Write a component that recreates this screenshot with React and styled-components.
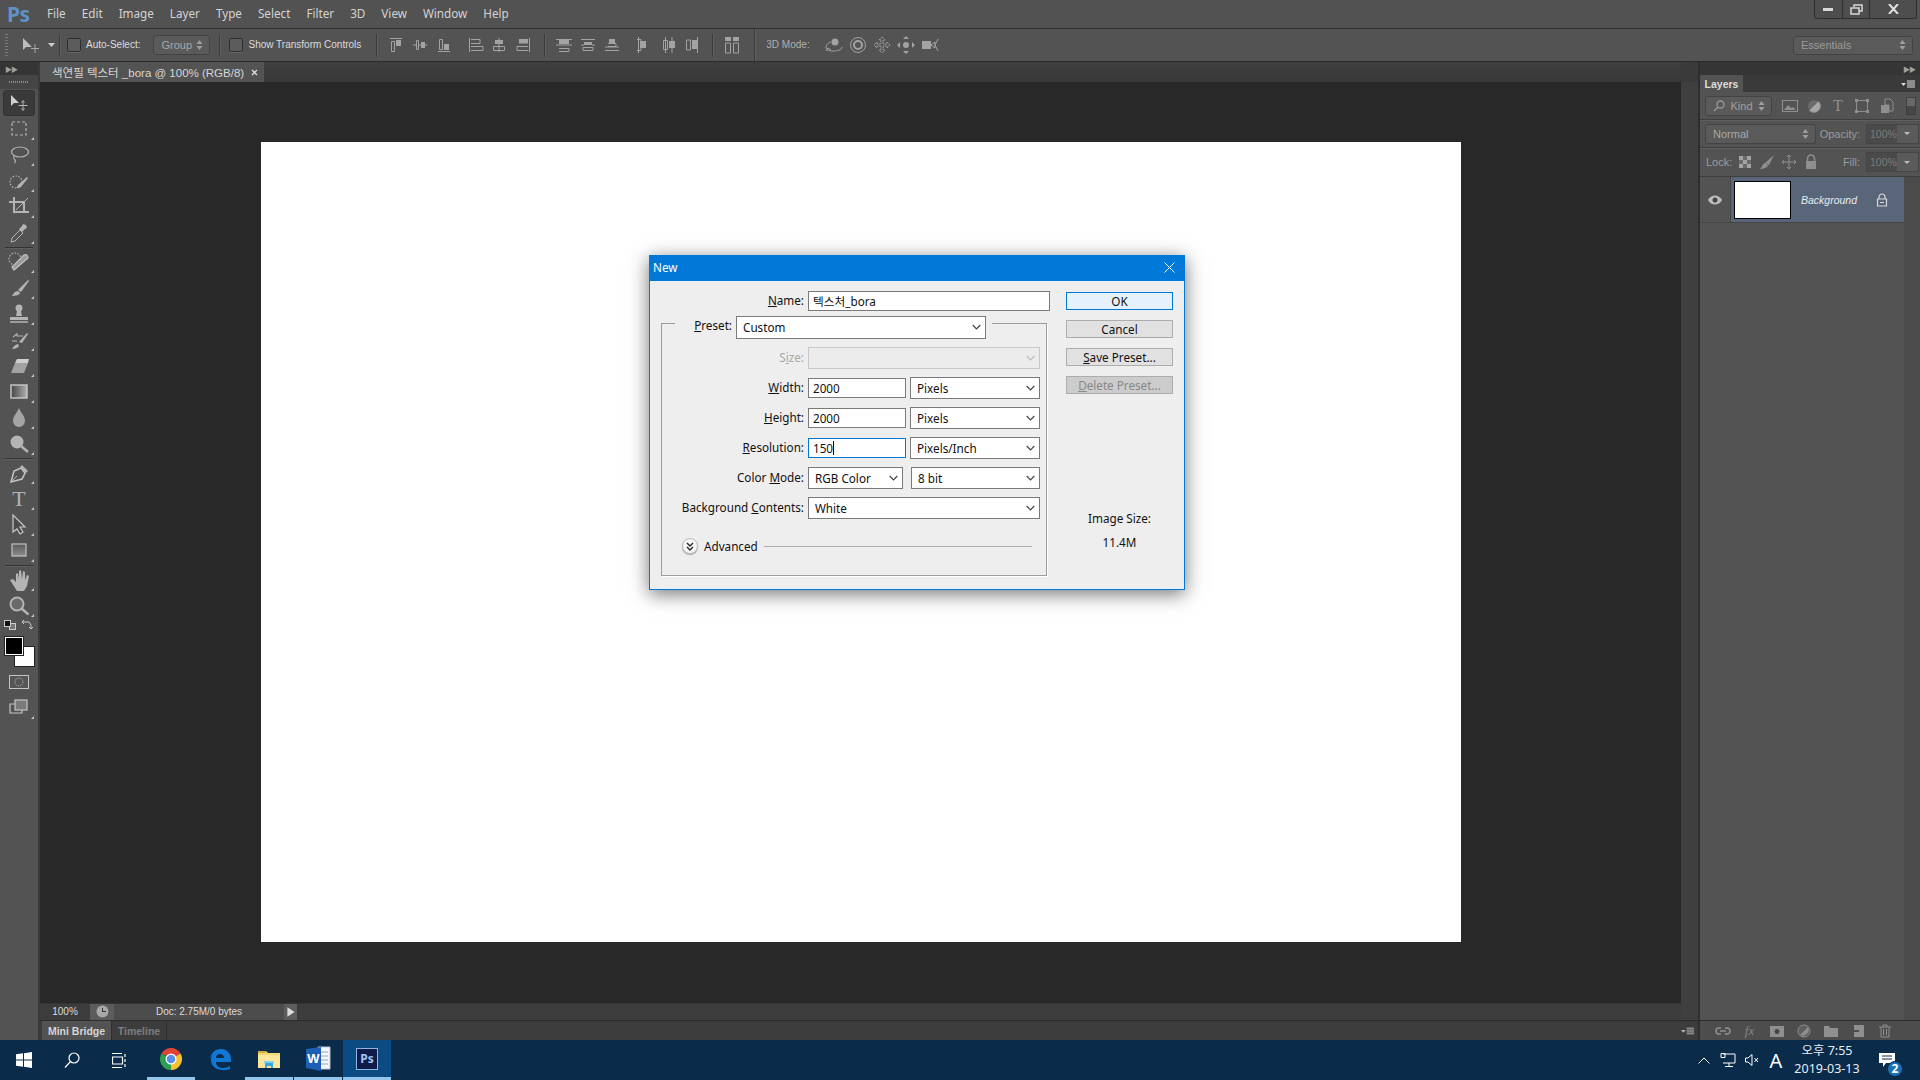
import React from "react";
import styled, { createGlobalStyle } from "styled-components";

const GlobalStyle = createGlobalStyle`
  html, body { margin: 0; padding: 0; background: #535353; overflow: hidden; }
  * { box-sizing: border-box; }
`;

const uiFont = `"Liberation Sans", "Noto Sans CJK KR", sans-serif`;
const menuFont = `"Noto Sans", "Noto Sans CJK KR", sans-serif`;
const dialogFont = `"Noto Sans", "Noto Sans CJK KR", sans-serif`;

const Root = styled.div`
  position: relative;
  width: 1920px;
  height: 1080px;
  display: flex;
  flex-direction: column;
  overflow: hidden;
  background: #535353;
  font-family: ${uiFont};
`;

/* ---------- menu bar ---------- */
const MenuBar = styled.div`
  height: 29px;
  flex: none;
  display: flex;
  align-items: center;
  padding-left: 7px;
  background: #525252;
  border-bottom: 1px solid #2f2f2f;
  position: relative;
`;
const Logo = styled.div`
  width: 40px;
  font: bold 21px/28px ${menuFont};
  color: #5f93c6;
  letter-spacing: -0.5px;
`;
const MenuList = styled.div`
  display: flex;
  gap: 16px;
  padding-bottom: 2px;
`;
const MenuItem = styled.span`
  font: 11.7px/26px ${menuFont};
  color: #d4d4d4;
`;
const WindowButtons = styled.div`
  position: absolute;
  top: 0;
  right: 3px;
  height: 19px;
  display: flex;
  border: 1px solid #2e2e2e;
  border-top: none;
  border-radius: 0 0 3px 3px;
  background: #4e4e4e;
`;
const WindowButton = styled.div`
  width: ${(p) => p.$w}px;
  display: flex;
  align-items: center;
  justify-content: center;
  border-left: ${(p) => (p.$first ? "none" : "1px solid #2e2e2e")};
`;

/* ---------- options bar ---------- */
const OptionsBar = styled.div`
  height: 33px;
  flex: none;
  display: flex;
  align-items: center;
  padding: 0 7px 0 5px;
  background: #535353;
  border-bottom: 1px solid #2b2b2b;
`;
const Grip = styled.div`
  width: 3px;
  height: 22px;
  background: repeating-linear-gradient(#7a7a7a 0 1px, transparent 1px 3px);
`;
const OptionSep = styled.div`
  width: 1px;
  height: ${(p) => (p.$tall ? 32 : 23)}px;
  background: #3a3a3a;
  box-shadow: 1px 0 0 #606060;
  margin-left: ${(p) => p.$ml}px;
`;
const OptionSlot = styled.div`
  display: flex;
  align-items: center;
  margin-left: ${(p) => p.$ml || 0}px;
  gap: ${(p) => p.$gap || 0}px;
`;
const EndSlot = styled.div`
  margin-left: auto;
`;
const CheckBox = styled.div`
  width: 14px;
  height: 14px;
  border: 1px solid #2f2f2f;
  border-radius: 2px;
  background: #5c5c5c;
  box-shadow: 0 1px 0 #666;
`;
const OptionLabel = styled.span`
  font-size: 10px;
  line-height: 14px;
  color: ${(p) => (p.$dim ? "#b0b0b0" : "#dcdcdc")};
  white-space: nowrap;
`;
const DarkSelect = styled.div`
  width: ${(p) => p.$w}px;
  height: ${(p) => p.$h || 20}px;
  flex: none;
  display: flex;
  align-items: center;
  justify-content: space-between;
  padding: 0 6px 0 7px;
  border: 1px solid #434343;
  border-radius: 3px;
  background: #5a5a5a;
  font-size: 11px;
  color: ${(p) => p.$color || "#a8a8a8"};
`;
const Spinner = () => (
  <svg width="7" height="12" viewBox="0 0 7 12">
    <path d="M3.5 1L6.5 5H.5zM3.5 11L.5 7h6z" fill="#9d9d9d" />
  </svg>
);
const IconRow = styled.div`
  display: flex;
  align-items: center;
  margin-left: ${(p) => p.$ml || 0}px;
`;
const IconCell = styled.div`
  width: ${(p) => p.$w || 24}px;
  height: 22px;
  display: flex;
  align-items: center;
  justify-content: center;
`;

const A = "#a3a3a3";
const Mini = ({ children, w = 18, h = 18 }) => (
  <svg width={w} height={h} viewBox={`0 0 ${w} ${h}`} fill="none" stroke={A} strokeWidth="1">
    {children}
  </svg>
);
const alignIcons = [
  <><path d="M3 2.5h12M4.5 5.500v10h3v-10z" /><rect x="9" y="4" width="5" height="6" fill={A} stroke="none" /></>,
  <><path d="M2 9h3M13 9h3M8 9h2M5.500 4.500h2v9h-2z" /><rect x="10" y="6" width="4" height="6" fill={A} stroke="none" /></>,
  <><path d="M3 15.500h12M4.500 3.500v10h3v-10z" /><rect x="9" y="8" width="5" height="6" fill={A} stroke="none" /></>,
  <><path d="M3.500 2v14M5 3.500h9v4H5M5 10.500h12v4H5" /></>,
  <><path d="M9 2v14M3.500 10.500h11v4h-11z" /><rect x="5" y="4" width="8" height="4" fill={A} stroke="none" /></>,
  <><path d="M15.500 2v14M14 10.500H3v4h11" /><rect x="5" y="3" width="9" height="4.500" fill={A} stroke="none" /></>,
  <><path d="M1 3.500h16M4 12.500h10v3H4M1 9h16" /><rect x="4" y="4" width="10" height="4" fill={A} stroke="none" /></>,
  <><path d="M2 3.500h14M2 9h3M13 9h3M4 11.500h10v3H4z" /><rect x="5" y="6" width="8" height="3" fill={A} stroke="none" /></>,
  <><path d="M2 14.500h14M5 7.500h8v3H5M2 11h14" /><rect x="6" y="3" width="6" height="4" fill={A} stroke="none" /></>,
  <><path d="M3.500 1v16M2 3.500h4v11H2M9 9h0" /><rect x="5" y="5" width="6" height="7" fill={A} stroke="none" /></>,
  <><path d="M6.500 1v16M4.500 4.500h4v9h-4zM13 1v16" /><rect x="10" y="5" width="6" height="7" fill={A} stroke="none" /></>,
  <><path d="M14.500 1v16M3.500 4h4v10h-4z" /><rect x="9" y="4" width="5" height="9" fill={A} stroke="none" /></>,
];
const AlignIcon = ({ i }) => <IconCell><Mini>{alignIcons[i]}</Mini></IconCell>;

/* ---------- workspace ---------- */
const Workspace = styled.div`
  flex: 1;
  display: flex;
  min-height: 0;
`;
const ToolPanel = styled.div`
  width: 40px;
  flex: none;
  display: flex;
  flex-direction: column;
  background: #535353;
  border-right: 2px solid #3a3a3a;
`;
const DockStrip = styled.div`
  height: 13px;
  flex: none;
  display: flex;
  align-items: center;
  justify-content: ${(p) => p.$align || "flex-start"};
  padding: 0 5px;
  background: #353535;
  color: #a0a0a0;
  font-size: 7px;
  letter-spacing: -1px;
`;
const DotGrip = styled.div`
  height: 14px;
  flex: none;
  margin-bottom: 1px;
  display: flex;
  align-items: center;
  justify-content: center;
  background: #454545;
  &::after {
    content: "";
    width: 20px;
    height: 2px;
    background: repeating-linear-gradient(90deg, #8a8a8a 0 1px, transparent 1px 2px);
  }
`;
const Tool = styled.div`
  position: relative;
  height: 26px;
  margin: 0 3px;
  display: flex;
  align-items: center;
  justify-content: center;
  border-radius: 3px;
  ${(p) => p.$active && "background: #3a3a3a; border: 1px solid #333;"}
  &::after {
    content: "";
    display: ${(p) => (p.$corner === false || p.$active ? "none" : "block")};
    position: absolute;
    right: 1px;
    bottom: 2px;
    border-left: 3px solid transparent;
    border-bottom: 3px solid #c4c4c4;
  }
`;
const ToolSep = styled.div`
  height: 1px;
  margin: 1px 5px 1px;
  background: #333;
  box-shadow: 0 1px 0 #5f5f5f;
`;
const Wells = styled.div`
  position: relative;
  height: 50px;
  flex: none;
`;
const Swatch = styled.div`
  position: absolute;
  left: ${(p) => p.$x}px;
  top: ${(p) => p.$y}px;
  width: ${(p) => p.$s}px;
  height: ${(p) => p.$s}px;
  background: ${(p) => p.$c};
  border: 1px solid ${(p) => p.$b || "#1f1f1f"};
  outline: ${(p) => (p.$o ? `1px solid ${p.$o}` : "none")};
`;
const SwapArrows = styled.svg`
  position: absolute;
  left: 21px;
  top: 0;
`;

const G = "#b4b4b4";
const ToolSvg = ({ children }) => (
  <svg width="24" height="24" viewBox="0 0 24 24" fill="none" stroke={G} strokeWidth="1.2">
    {children}
  </svg>
);
const toolIcons = {
  move: <><path d="M4 4v11l3-3h5z" fill="#cfcfcf" stroke="none" /><path d="M16 10v9M11.500 14.500h9M14.500 11.500l1.500-2 1.500 2M14.500 17.500l1.500 2 1.500-2" strokeWidth="1" /></>,
  marquee: <rect x="5" y="5" width="14" height="13" strokeDasharray="3 2" />,
  lasso: <><ellipse cx="13" cy="9" rx="8.500" ry="5" /><path d="M7 13c-1 2 0 3 1 4s0 3-1 3" /></>,
  quick: <><circle cx="9" cy="13" r="6" strokeDasharray="1.500 1.500" /><path d="M11 16l9-8 1 1-7 9c-2 1-4 1-5 1 1-1 2-2 2-3z" fill={G} stroke="none" /></>,
  crop: <><path d="M2 7h15v11M7 2v15h15" strokeWidth="2" /><path d="M9 15L21 3" strokeWidth="1" /></>,
  dropper: <><path d="M4 21l1-4 8-8 3 3-8 8z" strokeWidth="1" /><path d="M12 8l3-3 1-2 3 1 1 3-2 1-3 3z" fill={G} stroke="none" /></>,
  heal: <><circle cx="8" cy="9" r="6" strokeDasharray="1.500 1.500" /><path d="M7 20l-2-3L17 5c2-1 4 0 4 3z" fill="#9a9a9a" stroke="#c4c4c4" /></>,
  brush: <><path d="M11 14L21 4l1 1-8 11z" fill={G} stroke="none" /><path d="M5 20c1-1 2-5 6-5l2 2c0 2-5 3-8 3z" fill={G} stroke="none" /></>,
  stamp: <><circle cx="12" cy="6" r="3.500" fill={G} stroke="none" /><path d="M10 9h4l1 5H9z" fill={G} stroke="none" /><path d="M3 15h18v3H3z" fill={G} stroke="none" /><path d="M3 20h18" strokeWidth="1.500" /></>,
  history: <><path d="M12 14l8-9 1 1-6 9z" fill={G} stroke="none" /><path d="M5 21c1-1 2-4 6-5l1 2c-1 2-4 3-7 3z" fill={G} stroke="none" /><path d="M6 9l4-3v2h6M5 13h5" /></>,
  eraser: <><path d="M8 9h13l-4 10H4z" fill="#a2a2a2" stroke="none" /><path d="M10 5h12l-1 4H8z" fill="#cfcfcf" stroke="none" /></>,
  gradient: <><defs><linearGradient id="tg" x1="0" x2="1" y1="0" y2="0"><stop offset="0" stopColor="#444" /><stop offset="1" stopColor="#b0b0b0" /></linearGradient></defs><rect x="4" y="5" width="16" height="13" fill="url(#tg)" stroke="#c4c4c4" strokeWidth="1.500" /></>,
  drop: <path d="M12 2c2 5 6 8 6 13a6 6 0 0 1-12 0c0-5 4-8 6-13z" fill="#a4a4a4" stroke="none" />,
  dodge: <><circle cx="10" cy="10" r="6.500" fill="#b4b4b4" stroke="none" /><path d="M14 14l7 6" strokeWidth="2.500" /></>,
  pen: <><path d="M4 21l3-11 7-3 4 5-3 6z" stroke="#c4c4c4" strokeWidth="1.500" /><path d="M15 4l6 6-2 2-6-6z" fill={G} stroke="none" /><path d="M4 21l6-6" strokeWidth="1" /></>,
  path: <path d="M6 2v17l4-3 3 5 3-2-3-5h5z" fill="#4a4a4a" stroke="#c8c8c8" strokeWidth="1.200" />,
  shape: <><defs><linearGradient id="ts" x1="0" x2="0" y1="0" y2="1"><stop offset="0" stopColor="#5a5a5a" /><stop offset="1" stopColor="#8c8c8c" /></linearGradient></defs><rect x="5" y="5" width="14" height="12" fill="url(#ts)" stroke="#c4c4c4" strokeWidth="1.200" /></>,
  hand: <path d="M3 12l3-1 3 3V6l2-1 1 6V3l2-1 1 9 1-8 2 1v8l2-5 2 1-2 10-3 5H10z" fill={G} stroke="none" />,
  zoom: <><circle cx="10" cy="10" r="6.500" fill="#6a6a6a" stroke={G} strokeWidth="2" /><path d="M14.500 14.500l7 6" strokeWidth="2.500" /></>,
};
const TypeGlyph = styled.span`
  font: ${(p) => p.$size || 22}px/24px "Liberation Serif", serif;
  color: ${(p) => p.$color || "#b4b4b4"};
`;
const toolOrder = [
  ["move", "marquee", "lasso", "quick", "crop", "dropper"],
  ["heal", "brush", "stamp", "history", "eraser", "gradient", "drop", "dodge"],
  ["pen", "type", "path", "shape"],
  ["hand", "zoom"],
];

const Center = styled.div`
  width: 1641px;
  flex: none;
  display: flex;
  flex-direction: column;
`;
const TabRow = styled.div`
  height: 20px;
  flex: none;
  display: flex;
  background: linear-gradient(#3e3e3e, #383838);
`;
const DocTab = styled.div`
  width: 224px;
  display: flex;
  align-items: center;
  justify-content: space-between;
  padding: 0 6px 0 12px;
  background: #535353;
  color: #d6d6d6;
  font-size: 11.5px;
  white-space: nowrap;
`;
const Canvas = styled.div`
  flex: 1;
  min-height: 0;
  padding: 60px 0 0 221px;
  background: #282828;
`;
const Document = styled.div`
  width: 1200px;
  height: 800px;
  background: #ffffff;
`;
const StatusBar = styled.div`
  height: 17px;
  flex: none;
  display: flex;
  align-items: center;
  background: #3c3c3c;
  border-top: 1px solid #333;
  color: #dcdcdc;
  font-size: 10px;
`;
const StatusCell = styled.div`
  width: ${(p) => p.$w}px;
  height: 100%;
  padding-bottom: 1px;
  display: flex;
  align-items: center;
  justify-content: center;
  background: ${(p) => p.$bg || "transparent"};
`;
const BottomTabs = styled.div`
  height: 20px;
  flex: none;
  display: flex;
  background: #3c3c3c;
  border-top: 1px solid #2c2c2c;
  padding-left: 2px;
`;
const BottomTab = styled.div`
  width: ${(p) => p.$w}px;
  display: flex;
  align-items: center;
  justify-content: center;
  font-size: 10.5px;
  font-weight: bold;
  color: ${(p) => (p.$active ? "#d6d6d6" : "#7e7e7e")};
  background: ${(p) => (p.$active ? "#535353" : "transparent")};
  border-right: 1px solid #2e2e2e;
`;

const Gutter = styled.div`
  width: 19px;
  flex: none;
  display: flex;
  flex-direction: column;
  background: #3f3f3f;
  border-right: 2px solid #2e2e2e;
`;
const GutterTop = styled.div`
  height: 20px;
  flex: none;
  background: #3a3a3a;
`;
const GutterFill = styled.div`
  flex: 1;
`;
const GutterFoot = styled.div`
  height: 20px;
  flex: none;
  display: flex;
  align-items: center;
  justify-content: flex-end;
  padding-right: 3px;
  background: #3c3c3c;
  border-top: 1px solid #2c2c2c;
`;

/* ---------- layers panel ---------- */
const RightPanel = styled.div`
  flex: 1;
  min-width: 0;
  display: flex;
  flex-direction: column;
  background: #535353;
`;
const LayerTabs = styled.div`
  height: 17px;
  flex: none;
  display: flex;
  justify-content: space-between;
  background: #3a3a3a;
`;
const LayerTab = styled.div`
  width: 43px;
  display: flex;
  align-items: center;
  justify-content: center;
  background: #535353;
  color: #dcdcdc;
  font-size: 10.5px;
  font-weight: bold;
`;
const PanelMenu = styled.div`
  display: flex;
  align-items: center;
  padding-right: 4px;
`;
const PanelRow = styled.div`
  height: ${(p) => p.$h}px;
  flex: none;
  display: flex;
  align-items: center;
  padding: 0 1px 0 5px;
  border-bottom: 1px solid #3e3e3e;
  box-shadow: 0 1px 0 #5f5f5f;
  color: #9c9c9c;
  font-size: 11px;
`;
const PanelText = styled.span`
  margin-left: ${(p) => p.$ml || 0}px;
  white-space: nowrap;
`;
const PercentGroup = styled.div`
  margin-left: auto;
  display: flex;
  align-items: center;
  gap: 6px;
`;
const Percent = styled.div`
  width: 53px;
  height: 20px;
  display: flex;
  background: #4a4a4a;
  border: 1px solid #454545;
  color: #7c7c7c;
  font-size: 10.5px;
  line-height: 18px;
`;
const PercentValue = styled.span`
  flex: 1;
  padding-left: 3px;
`;
const PercentArrow = styled.span`
  width: 22px;
  background: #5a5a5a;
  display: flex;
  align-items: center;
  justify-content: center;
  &::after {
    content: "";
    border-top: 3px solid #bbb;
    border-left: 3px solid transparent;
    border-right: 3px solid transparent;
  }
`;
const LayerToggle = styled.div`
  width: 10px;
  height: 18px;
  margin-left: 7px;
  background: linear-gradient(#686868 50%, #474747 50%);
  border: 1px solid #3f3f3f;
`;
const LayerList = styled.div`
  flex: 1;
  min-height: 0;
  display: flex;
  background: #535353;
`;
const LayerColumn = styled.div`
  flex: 1;
`;
const LayerScroll = styled.div`
  width: 16px;
  flex: none;
  background: #4b4b4b;
`;
const LayerRow = styled.div`
  height: 46px;
  display: flex;
  border-bottom: 1px solid #454545;
`;
const EyeCell = styled.div`
  width: 31px;
  display: flex;
  align-items: center;
  justify-content: center;
  border-right: 1px solid #454545;
`;
const LayerBody = styled.div`
  flex: 1;
  display: flex;
  align-items: center;
  padding-left: 3px;
  background: #596679;
`;
const Thumb = styled.div`
  width: 57px;
  height: 38px;
  background: #fff;
  border: 1px solid #000;
`;
const LayerName = styled.span`
  margin-left: 10px;
  width: 75px;
  color: #e8ecf2;
  font-size: 10.5px;
  font-style: italic;
`;
const PanelFoot = styled.div`
  height: 20px;
  flex: none;
  display: flex;
  align-items: center;
  padding-left: 9px;
  background: #4d4d4d;
  border-top: 1px solid #2c2c2c;
`;
const FootIcon = styled.div`
  width: 27px;
  display: flex;
  justify-content: center;
  color: #858585;
  font: italic 13px/18px "Liberation Serif", serif;
`;
const P = "#8f8f8f";
const Pic = ({ children, s = 18 }) => (
  <svg width={s} height={s} viewBox="0 0 18 18" fill="none" stroke={P} strokeWidth="1">
    {children}
  </svg>
);

/* ---------- new document dialog ---------- */
const Dialog = styled.div`
  position: absolute;
  left: 649px;
  top: 255px;
  width: 536px;
  height: 335px;
  display: flex;
  flex-direction: column;
  background: #eeeeee;
  border: 1px solid #0078d7;
  box-shadow: 0 4px 18px rgba(0, 0, 0, 0.55);
  font: 11.7px ${dialogFont};
  color: #111;
`;
const TitleBar = styled.div`
  height: 25px;
  flex: none;
  display: flex;
  align-items: center;
  justify-content: space-between;
  padding: 0 9px 3px 3px;
  background: #0078d7;
  color: #fff;
`;
const DialogBody = styled.div`
  flex: 1;
  display: flex;
`;
const FormColumn = styled.div`
  width: 416px;
  flex: none;
  padding-top: 10px;
`;
const Row = styled.div`
  display: flex;
  align-items: center;
  gap: 4px;
  height: ${(p) => p.$h || 22}px;
`;
const Label = styled.label`
  width: ${(p) => p.$w}px;
  flex: none;
  padding-bottom: 2px;
  text-align: right;
  white-space: nowrap;
  color: ${(p) => (p.$off ? "#a8a8a8" : "#111")};
`;
const Input = styled.div`
  width: ${(p) => p.$w}px;
  height: 20px;
  flex: none;
  display: flex;
  align-items: center;
  padding: 0 0 1px 4px;
  background: #fff;
  border: 1px solid ${(p) => (p.$focus ? "#0078d7" : "#7a7a7a")};
`;
const Caret = styled.span`
  width: 1px;
  height: 14px;
  background: #000;
`;
const Select = styled.div`
  width: ${(p) => p.$w}px;
  height: ${(p) => p.$h || 22}px;
  flex: none;
  display: flex;
  align-items: center;
  justify-content: space-between;
  padding: 0 4px 1px 6px;
  margin-left: ${(p) => p.$ml || 0}px;
  background: ${(p) => (p.$off ? "#ececec" : "#fff")};
  border: 1px solid ${(p) => (p.$off ? "#c8c8c8" : "#7a7a7a")};
`;
const Chevron = ({ off }) => (
  <svg width="9" height="6" viewBox="0 0 9 6" fill="none" stroke={off ? "#bdbdbd" : "#444"} strokeWidth="1.200">
    <path d="M.7 1l3.800 3.800L8.300 1" />
  </svg>
);
const Group = styled.fieldset`
  margin: 0 0 0 11px;
  padding: 0 6px 19px 0;
  width: 386px;
  min-width: 0;
  border: 1px solid #9c9c9c;
  box-shadow: 1px 1px 0 #fff;
`;
const GroupLegend = styled.legend`
  margin-left: 13px;
  padding: 5px 6px 0 0;
  width: 317px;
  height: 24px;
  display: flex;
  align-items: flex-start;
  gap: 4px;
`;
const LegendLabel = styled.label`
  flex: 1;
  text-align: right;
  line-height: 19px;
`;
const Stack = styled.div`
  display: flex;
  flex-direction: column;
  gap: 8px;
  padding-top: 12px;
`;
const AdvancedRow = styled.div`
  height: 20px;
  margin-top: 17px;
  margin-left: 20px;
  display: flex;
  align-items: center;
  gap: 6px;
`;
const Disclosure = styled.div`
  width: 16px;
  height: 16px;
  border-radius: 50%;
  display: flex;
  align-items: center;
  justify-content: center;
  background: #f6f6f6;
  border: 1px solid #bdbdbd;
  box-shadow: 0 1px 1px #aaa;
`;
const Rule = styled.div`
  width: 268px;
  height: 1px;
  background: #aeaeae;
`;
const ButtonColumn = styled.div`
  width: 107px;
  flex: none;
  padding-top: 11px;
  display: flex;
  flex-direction: column;
  gap: 10px;
`;
const DialogButton = styled.div`
  height: 18px;
  display: flex;
  align-items: center;
  justify-content: center;
  border: 1px solid ${(p) => (p.$primary ? "#0078d7" : "#adadad")};
  background: ${(p) => (p.$primary ? "#e5f1fb" : p.$off ? "#cccccc" : "#e1e1e1")};
  color: ${(p) => (p.$off ? "#888" : "#111")};
`;
const SizeInfo = styled.div`
  margin-top: 102px;
  text-align: center;
  line-height: 24px;
`;

/* ---------- taskbar ---------- */
const Taskbar = styled.div`
  height: 40px;
  flex: none;
  display: flex;
  background: #0a2b49;
  color: #fff;
`;
const SysButton = styled.div`
  width: 48px;
  display: flex;
  align-items: center;
  justify-content: center;
`;
const AppStrip = styled.div`
  display: flex;
  margin-left: 3px;
`;
const AppButton = styled.div`
  width: 48px;
  margin-right: 1px;
  display: flex;
  align-items: center;
  justify-content: center;
  background: ${(p) => (p.$active ? "#0c4a82" : "transparent")};
  border-bottom: 3px solid ${(p) => (p.$open ? "#93c6ea" : "transparent")};
  padding-top: 1px;
`;
const Tray = styled.div`
  margin-left: auto;
  display: flex;
  align-items: center;
`;
const TrayIcon = styled.div`
  width: 24px;
  display: flex;
  justify-content: center;
  font: 20px "Noto Sans", sans-serif;
`;
const Clock = styled.div`
  width: 68px;
  margin-left: 5px;
  text-align: center;
  white-space: nowrap;
  font: 12.5px/18px "Noto Sans", "Noto Sans CJK KR", sans-serif;
  color: #e8eef4;
`;
const Notify = styled.div`
  position: relative;
  width: 54px;
  margin-right: 5px;
  display: flex;
  justify-content: center;
`;
const Badge = styled.span`
  position: absolute;
  right: 12px;
  top: 8px;
  width: 16px;
  height: 16px;
  border-radius: 50%;
  background: #1c6fb5;
  border: 1px solid #0a2b49;
  font: bold 12px/14px "Noto Sans", sans-serif;
  text-align: center;
`;
const PsTile = styled.div`
  width: 22px;
  height: 22px;
  display: flex;
  align-items: center;
  justify-content: center;
  background: #101b4a;
  border: 1.5px solid #8fb6e6;
  color: #9ec5f2;
  font: bold 12px/1 "Noto Sans", sans-serif;
`;

const Chrome = () => (
  <svg width="24" height="24" viewBox="0 0 24 24">
    <path d="M12 12L2.470 6.500A11 11 0 0 1 21.530 6.500z" fill="#db4437" />
    <path d="M12 12L21.530 6.500A11 11 0 0 1 12 23z" fill="#fbc02d" />
    <path d="M12 12L12 23A11 11 0 0 1 2.470 6.500z" fill="#2e9e4f" />
    <circle cx="12" cy="12" r="5.500" fill="#fff" />
    <circle cx="12" cy="12" r="4.300" fill="#5a8ff0" />
  </svg>
);
const Edge = () => (
  <svg width="24" height="24" viewBox="0 0 24 24">
    <path d="M2 12C3 5 8 2 13 2c6 0 10 4 10 11v2H8c0 4 3 6 7 6 3 0 5-1 7-2v3c-2 1-5 1-7 1-7 0-12-4-12-10 0-3 1-5 3-7-1 1-3 3-4 6zm6-1h8c0-3-2-4-4-4s-4 1-4 4z" fill="#0f78d4" />
  </svg>
);
const Explorer = () => (
  <svg width="24" height="24" viewBox="0 0 24 24">
    <path d="M1 4h8l2 2h12v15H1z" fill="#f6d776" />
    <path d="M1 8h22v13H1z" fill="#fbe69b" />
    <path d="M1 4h8v2H1z" fill="#d9ae3d" />
    <path d="M8 16h8v5h-2v-2h-4v2H8z" fill="#37a6e0" />
    <path d="M7 14h10v2H7z" fill="#7fd0f2" />
  </svg>
);
const Word = () => (
  <svg width="26" height="26" viewBox="0 0 26 26">
    <path d="M13 1h12v22H13z" fill="#f4f6fa" stroke="#b9c6d8" />
    <path d="M15 6h8M15 10h8M15 14h8M15 18h8" stroke="#8ea8cc" />
    <path d="M1 3l15-2v24L1 22z" fill="#1d5fb4" />
    <text x="8.500" y="17" textAnchor="middle" fontFamily="Liberation Sans" fontWeight="bold" fontSize="13" fill="#fff">W</text>
  </svg>
);

const Arrow = ({ size = 10 }) => (
  <svg width={size} height={size} viewBox="0 0 10 10"><path d="M2 1l6 4-6 4z" fill="#dcdcdc" /></svg>
);

export default function App() {
  return (
    <Root>
      <GlobalStyle />
      <MenuBar>
        <Logo>Ps</Logo>
        <MenuList>
          {["File", "Edit", "Image", "Layer", "Type", "Select", "Filter", "3D", "View", "Window", "Help"].map((m) => (
            <MenuItem key={m}>{m}</MenuItem>
          ))}
        </MenuList>
        <WindowButtons>
          <WindowButton $w={27} $first>
            <svg width="11" height="5" viewBox="0 0 11 5"><path d="M0 1h10v3H0z" fill="#d8d8d8" /></svg>
          </WindowButton>
          <WindowButton $w={27}>
            <svg width="13" height="11" viewBox="0 0 13 11" fill="none" stroke="#d8d8d8" strokeWidth="1.500"><path d="M4 3V1h8v6h-3M1 4h8v6H1z" /></svg>
          </WindowButton>
          <WindowButton $w={47}>
            <svg width="11" height="10" viewBox="0 0 11 10" fill="none" stroke="#e0e0e0" strokeWidth="2"><path d="M1 0l9 10M10 0L1 10" /></svg>
          </WindowButton>
        </WindowButtons>
      </MenuBar>

      <OptionsBar>
        <Grip />
        <OptionSlot $ml={14}>
          <svg width="18" height="18" viewBox="0 0 18 18">
            <path d="M1 2v12l3-3h6z" fill="#bdbdbd" />
            <path d="M13 8v9M9 12.500h8" stroke="#a8a8a8" />
          </svg>
        </OptionSlot>
        <OptionSlot $ml={8}>
          <svg width="7" height="4" viewBox="0 0 7 4"><path d="M0 0h7L3.500 4z" fill="#cfcfcf" /></svg>
        </OptionSlot>
        <OptionSep $ml={4} />
        <OptionSlot $ml={7} $gap={5}>
          <CheckBox />
          <OptionLabel>Auto-Select:</OptionLabel>
        </OptionSlot>
        <OptionSlot $ml={13}>
          <DarkSelect $w={57}>Group<Spinner /></DarkSelect>
        </OptionSlot>
        <OptionSep $ml={9} />
        <OptionSlot $ml={9} $gap={5}>
          <CheckBox />
          <OptionLabel>Show Transform Controls</OptionLabel>
        </OptionSlot>
        <OptionSep $ml={15} />
        <IconRow $ml={7}>{[0, 1, 2].map((i) => <AlignIcon key={i} i={i} />)}</IconRow>
        <IconRow $ml={7}>{[3, 4, 5].map((i) => <AlignIcon key={i} i={i} />)}</IconRow>
        <OptionSep $ml={9} />
        <IconRow $ml={7}>{[6, 7, 8].map((i) => <AlignIcon key={i} i={i} />)}</IconRow>
        <IconRow $ml={8}>{[9, 10, 11].map((i) => <AlignIcon key={i} i={i} />)}</IconRow>
        <OptionSep $ml={8} />
        <IconRow $ml={7}>
          <IconCell>
            <Mini>
              <rect x="2" y="1" width="6" height="4" fill={A} stroke="none" />
              <rect x="10" y="1" width="6" height="4" fill={A} stroke="none" />
              <path d="M2.500 7h5v10h-5zM10.500 7h5v10h-5z" />
            </Mini>
          </IconCell>
        </IconRow>
        <OptionSep $ml={10} $tall />
        <OptionSlot $ml={11}><OptionLabel $dim>3D Mode:</OptionLabel></OptionSlot>
        <IconRow $ml={12}>
          <IconCell>
            <Mini w={20}><circle cx="11" cy="6" r="3.500" fill={A} stroke="none" /><path d="M2 11c1-4 4-5 5-5M18 11c0 3-5 4-9 4s-7-1-7-4M2 15l2-3 3 2" /></Mini>
          </IconCell>
          <IconCell>
            <Mini><circle cx="9" cy="9" r="7.500" /><circle cx="9" cy="9" r="4" strokeWidth="2" /></Mini>
          </IconCell>
          <IconCell>
            <Mini><path d="M9 1l3 3h-2v4h4V6l3 3-3 3v-2h-4v4h2l-3 3-3-3h2v-4H4v2L1 9l3-3v2h4V4H6z" strokeDasharray="1.500 .6" /></Mini>
          </IconCell>
          <IconCell>
            <Mini><circle cx="9" cy="9" r="3" fill={A} stroke="none" /><path d="M9 0l3 3H6zM9 18l-3-3h6zM0 9l3-3v6zM18 9l-3 3V6z" fill={A} stroke="none" /></Mini>
          </IconCell>
          <IconCell>
            <Mini><rect x="1" y="5" width="9" height="8" fill={A} stroke="none" /><path d="M10 9l4-3v6zM17 3l-3 6 3 6" /></Mini>
          </IconCell>
        </IconRow>
        <EndSlot>
          <DarkSelect $w={120} $h={19} $color="#9a9a9a">Essentials<Spinner /></DarkSelect>
        </EndSlot>
      </OptionsBar>

      <Workspace>
        <ToolPanel>
          <DockStrip>▶▶</DockStrip>
          <DotGrip />
          {toolOrder.map((group, gi) => (
            <React.Fragment key={gi}>
              {group.map((name) => (
                <Tool key={name} $active={name === "move"}>
                  {name === "type" ? <TypeGlyph>T</TypeGlyph> : <ToolSvg>{toolIcons[name]}</ToolSvg>}
                </Tool>
              ))}
              {gi < toolOrder.length - 1 && <ToolSep />}
            </React.Fragment>
          ))}
          <Wells>
            <Swatch $x={15} $y={28} $s={19} $c="#fff" $b="#fff" $o="#222" />
            <Swatch $x={5} $y={18} $s={18} $c="#000" $b="#fff" $o="#222" />
            <Swatch $x={9} $y={4} $s={7} $c="#777" $b="#ccc" />
            <Swatch $x={4} $y={1} $s={7} $c="#111" $b="#ccc" />
            <SwapArrows width="12" height="11" viewBox="0 0 12 11" fill="none" stroke="#c8c8c8">
              <path d="M1 3h7l2 3v3M3 1L1 3l2 2M8 8l2 2 2-2" />
            </SwapArrows>
          </Wells>
          <Tool $corner={false}>
            <svg width="20" height="14" viewBox="0 0 20 14"><rect x=".5" y=".5" width="19" height="13" fill="#555" stroke="#c4c4c4" /><circle cx="10" cy="7" r="4" fill="none" stroke="#c4c4c4" strokeDasharray="1 1" /></svg>
          </Tool>
          <Tool>
            <svg width="20" height="18" viewBox="0 0 20 18" fill="none" stroke="#c4c4c4" strokeWidth="1.200"><rect x="6" y="1" width="12" height="10" fill="#7a7a7a" /><path d="M6 5H1v9h12v-3" /></svg>
          </Tool>
        </ToolPanel>

        <Center>
          <TabRow>
            <DocTab>
              색연필 텍스터 _bora @ 100% (RGB/8)
              <svg width="7" height="7" viewBox="0 0 7 7" stroke="#ddd" strokeWidth="1.300"><path d="M1 1l5 5M6 1L1 6" /></svg>
            </DocTab>
          </TabRow>
          <Canvas><Document /></Canvas>
          <StatusBar>
            <StatusCell $w={50} $bg="#3c3c3c">100%</StatusCell>
            <StatusCell $w={24} $bg="#5c5c5c">
              <svg width="13" height="13" viewBox="0 0 13 13"><circle cx="6.500" cy="6.500" r="6" fill="#a8a8a8" /><path d="M6 3h1v3h3v1H6z" fill="#333" /></svg>
            </StatusCell>
            <StatusCell $w={170} $bg="#4c4c4c">Doc: 2.75M/0 bytes</StatusCell>
            <StatusCell $w={13} $bg="#5c5c5c"><Arrow size={12} /></StatusCell>
          </StatusBar>
          <BottomTabs>
            <BottomTab $w={70} $active>Mini Bridge</BottomTab>
            <BottomTab $w={55}>Timeline</BottomTab>
          </BottomTabs>
        </Center>

        <Gutter>
          <GutterTop />
          <GutterFill />
          <GutterFoot>
            <svg width="15" height="8" viewBox="0 0 15 8"><path d="M0 3h5L2.500 6z" fill="#b5b5b5" /><path d="M6 1h8M6 3h8M6 5h8M6 7h8" stroke="#b5b5b5" /></svg>
          </GutterFoot>
        </Gutter>

        <RightPanel>
          <DockStrip $align="flex-end">▶▶</DockStrip>
          <LayerTabs>
            <LayerTab>Layers</LayerTab>
            <PanelMenu>
              <svg width="15" height="8" viewBox="0 0 15 8"><path d="M0 3h5L2.500 6z" fill="#ddd" /><path d="M6 1h8M6 3h8M6 5h8M6 7h8" stroke="#ddd" /></svg>
            </PanelMenu>
          </LayerTabs>
          <PanelRow $h={28}>
            <DarkSelect $w={67} $color="#a0a0a0">
              <svg width="12" height="12" viewBox="0 0 12 12" fill="none" stroke="#9a9a9a" strokeWidth="1.300"><circle cx="7.500" cy="4.500" r="3.500" /><path d="M5 7l-4 4" /></svg>
              Kind<Spinner />
            </DarkSelect>
            <IconRow $ml={6}>
              <IconCell $w={24}><Pic><rect x="1.500" y="3.500" width="15" height="11" /><path d="M3 13l4-5 3 3 2-1 3 3z" fill={P} stroke="none" /></Pic></IconCell>
              <IconCell $w={24}><Pic><circle cx="9" cy="9" r="6" fill="#6b6b6b" stroke="none" /><path d="M13.500 4.500a6 6 0 0 1-9 9z" fill="#a8a8a8" /></Pic></IconCell>
              <IconCell $w={24}><TypeGlyph $size={16} $color={P}>T</TypeGlyph></IconCell>
              <IconCell $w={24}><Pic><path d="M3.500 3.500h11v11h-11z" /><path d="M2 2h3v3H2zM13 2h3v3h-3zM2 13h3v3H2zM13 13h3v3h-3z" fill={P} stroke="none" /></Pic></IconCell>
              <IconCell $w={25}><Pic><path d="M7 2h5l3 3v9H11V8H7z" /><rect x="3" y="8" width="8" height="8" fill={P} stroke="none" /></Pic></IconCell>
            </IconRow>
            <LayerToggle />
          </PanelRow>
          <PanelRow $h={28}>
            <DarkSelect $w={111}>Normal<Spinner /></DarkSelect>
            <PercentGroup>
              <PanelText>Opacity:</PanelText>
              <Percent><PercentValue>100%</PercentValue><PercentArrow /></Percent>
            </PercentGroup>
          </PanelRow>
          <PanelRow $h={29}>
            <PanelText $ml={1}>Lock:</PanelText>
            <IconRow $ml={2}>
              <IconCell $w={22}>
                <svg width="12" height="12" viewBox="0 0 12 12"><rect width="12" height="12" fill="#6a6a6a" /><path d="M0 0h4v4H0zM8 0h4v4H8zM4 4h4v4H4zM0 8h4v4H0zM8 8h4v4H8z" fill="#a4a4a4" /></svg>
              </IconCell>
              <IconCell $w={22}><Pic><path d="M7 10l9-8-5 10z" fill={P} stroke="none" /><path d="M2 16c2-1 2-5 5-6l3 2c0 2-4 4-8 4z" fill={P} stroke="none" /></Pic></IconCell>
              <IconCell $w={22}><Pic><path d="M9 2v14M2 9h14M7 4l2-2 2 2M7 14l2 2 2-2M4 7L2 9l2 2M14 7l2 2-2 2" /></Pic></IconCell>
              <IconCell $w={22}><Pic><path d="M5.500 8V5.500a3.500 3.500 0 0 1 7 0V8" strokeWidth="1.500" /><rect x="4" y="8" width="10" height="8" fill={P} stroke="none" /></Pic></IconCell>
            </IconRow>
            <PercentGroup>
              <PanelText>Fill:</PanelText>
              <Percent><PercentValue>100%</PercentValue><PercentArrow /></Percent>
            </PercentGroup>
          </PanelRow>
          <LayerList>
            <LayerColumn>
              <LayerRow>
                <EyeCell>
                  <svg width="14" height="10" viewBox="0 0 14 10"><path d="M0 5c3-6 11-6 14 0-3 6-11 6-14 0z" fill="#bdbdbd" /><circle cx="7" cy="5" r="2.500" fill="#444" /></svg>
                </EyeCell>
                <LayerBody>
                  <Thumb />
                  <LayerName>Background</LayerName>
                  <svg width="12" height="14" viewBox="0 0 12 14" fill="none" stroke="#d4d8de" strokeWidth="1.200"><path d="M3 6V4a3 3 0 0 1 6 0v2M1.500 6h9v7h-9zM4 9.500h4" /></svg>
                </LayerBody>
              </LayerRow>
            </LayerColumn>
            <LayerScroll />
          </LayerList>
          <PanelFoot>
            <FootIcon><Pic><path d="M7 6H5a3 3 0 0 0 0 6h2M11 6h2a3 3 0 0 1 0 6h-2M6 9h6" strokeWidth="1.500" /></Pic></FootIcon>
            <FootIcon>fx</FootIcon>
            <FootIcon><Pic><rect x="2" y="4" width="14" height="11" fill={P} stroke="none" /><circle cx="9" cy="9.500" r="3" fill="#444" /></Pic></FootIcon>
            <FootIcon><Pic><circle cx="9" cy="9" r="6" fill="#5e5e5e" stroke={P} /><path d="M13 5a6 6 0 0 1-8 8z" fill={P} stroke="none" /></Pic></FootIcon>
            <FootIcon><Pic><path d="M2 4h5l1 2h8v9H2z" fill={P} stroke="none" /></Pic></FootIcon>
            <FootIcon><Pic><path d="M5 3h10v12H5v-5h5V8H5z" fill={P} stroke="none" /></Pic></FootIcon>
            <FootIcon><Pic><path d="M3 5h12M7 5V3h4v2M5 5v10h8V5M7.500 7v6M10.500 7v6" /></Pic></FootIcon>
          </PanelFoot>
        </RightPanel>
      </Workspace>

      <Taskbar>
        <SysButton>
          <svg width="16" height="16" viewBox="0 0 16 16"><path d="M0 2.300L7 1.300v6.300H0zM8 1.200L16 0v7.600H8zM0 8.400h7v6.300L0 13.700zM8 8.400h8V16L8 14.800z" fill="#fff" /></svg>
        </SysButton>
        <SysButton>
          <svg width="16" height="16" viewBox="0 0 16 16" fill="none" stroke="#fff" strokeWidth="1.200"><circle cx="10" cy="6" r="5" /><path d="M6.500 9.500L1 15.500" /></svg>
        </SysButton>
        <SysButton>
          <svg width="16" height="15" viewBox="0 0 16 15" fill="none" stroke="#fff"><path d="M0 .5h10M0 14.500h10M.5 4h10v7H.5zM13 1v3M13 6v3M13 11v3" strokeWidth="1.200" /></svg>
        </SysButton>
        <AppStrip>
          <AppButton $open><Chrome /></AppButton>
          <AppButton><Edge /></AppButton>
          <AppButton $open><Explorer /></AppButton>
          <AppButton $open><Word /></AppButton>
          <AppButton $open $active><PsTile>Ps</PsTile></AppButton>
        </AppStrip>
        <Tray>
          <TrayIcon>
            <svg width="12" height="7" viewBox="0 0 12 7" fill="none" stroke="#fff"><path d="M.5 6.500L6 1l5.500 5.500" /></svg>
          </TrayIcon>
          <TrayIcon>
            <svg width="16" height="14" viewBox="0 0 16 14" fill="none" stroke="#fff"><path d="M3 1h12v9H3M1 .5h4v4H1zM9 10v3M5 13.500h8" /></svg>
          </TrayIcon>
          <TrayIcon>
            <svg width="14" height="12" viewBox="0 0 14 12" fill="none" stroke="#fff"><path d="M.5 4h2.500L7 .5v11L3 8H.5zM9.500 4l3.500 4M13 4L9.500 8" /></svg>
          </TrayIcon>
          <TrayIcon>A</TrayIcon>
          <Clock>오후 7:55<br />2019-03-13</Clock>
          <Notify>
            <svg width="18" height="15" viewBox="0 0 18 15"><path d="M0 0h16v10h-9l-3 4v-4H0z" fill="#fff" /><path d="M3 3h10M3 6h10" stroke="#0a2b49" /></svg>
            <Badge>2</Badge>
          </Notify>
        </Tray>
      </Taskbar>

      <Dialog>
        <TitleBar>
          New
          <svg width="11" height="11" viewBox="0 0 11 11" stroke="#fff"><path d="M.5.5l10 10M10.500.5l-10 10" /></svg>
        </TitleBar>
        <DialogBody>
          <FormColumn>
            <Row $h={20}>
              <Label $w={154}><u>N</u>ame:</Label>
              <Input $w={242}>텍스처_bora</Input>
            </Row>
            <Group>
              <GroupLegend>
                <LegendLabel><u>P</u>reset:</LegendLabel>
                <Select $w={250} $h={23}>Custom<Chevron /></Select>
              </GroupLegend>
              <Stack>
                <Row>
                  <Label $w={142} $off>S<u>i</u>ze:</Label>
                  <Select $w={232} $off><span /><Chevron off /></Select>
                </Row>
                <Row>
                  <Label $w={142}><u>W</u>idth:</Label>
                  <Input $w={98}>2000</Input>
                  <Select $w={130}>Pixels<Chevron /></Select>
                </Row>
                <Row>
                  <Label $w={142}><u>H</u>eight:</Label>
                  <Input $w={98}>2000</Input>
                  <Select $w={130}>Pixels<Chevron /></Select>
                </Row>
                <Row>
                  <Label $w={142}><u>R</u>esolution:</Label>
                  <Input $w={98} $focus>150<Caret /></Input>
                  <Select $w={130}>Pixels/Inch<Chevron /></Select>
                </Row>
                <Row>
                  <Label $w={142}>Color <u>M</u>ode:</Label>
                  <Select $w={95}>RGB Color<Chevron /></Select>
                  <Select $w={129} $ml={4}>8 bit<Chevron /></Select>
                </Row>
                <Row>
                  <Label $w={142}>Background <u>C</u>ontents:</Label>
                  <Select $w={232}>White<Chevron /></Select>
                </Row>
              </Stack>
              <AdvancedRow>
                <Disclosure>
                  <svg width="8" height="9" viewBox="0 0 8 9" fill="none" stroke="#222" strokeWidth="1.300"><path d="M1 1l3 3 3-3M1 5l3 3 3-3" /></svg>
                </Disclosure>
                Advanced
                <Rule />
              </AdvancedRow>
            </Group>
          </FormColumn>
          <ButtonColumn>
            <DialogButton $primary>OK</DialogButton>
            <DialogButton>Cancel</DialogButton>
            <DialogButton><u>S</u>ave Preset...</DialogButton>
            <DialogButton $off><u>D</u>elete Preset...</DialogButton>
            <SizeInfo>Image Size:<br />11.4M</SizeInfo>
          </ButtonColumn>
        </DialogBody>
      </Dialog>
    </Root>
  );
}
